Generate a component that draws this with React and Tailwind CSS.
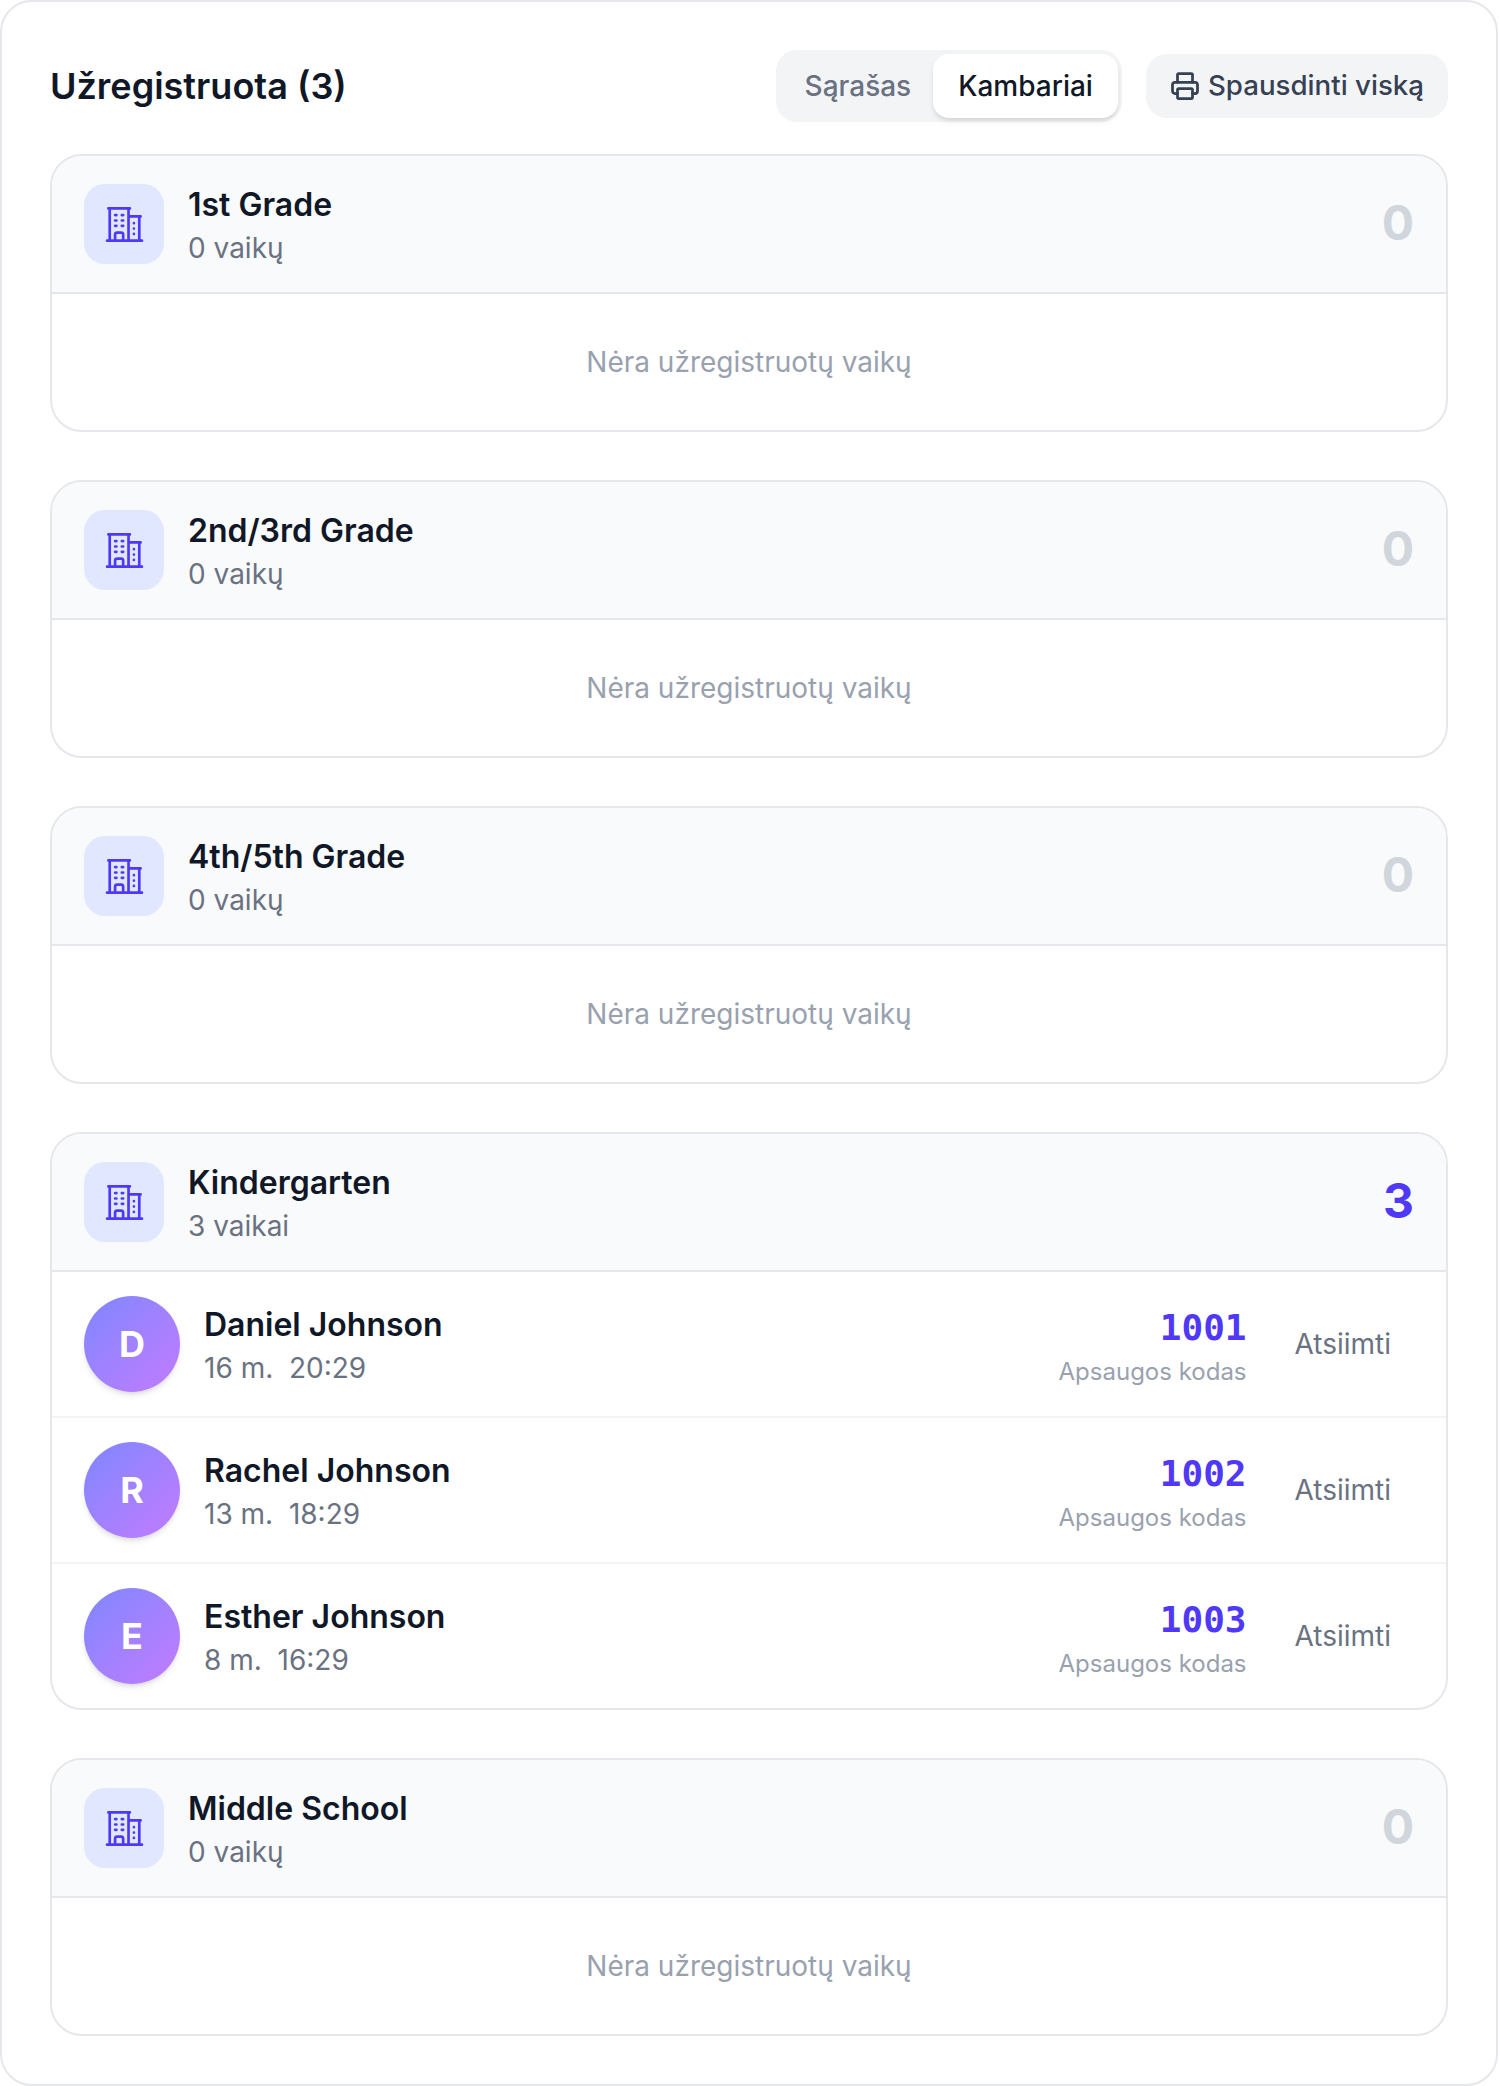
import React from 'react';
import { HiOutlineBuildingOffice2 } from 'react-icons/hi2';
import { Printer } from 'lucide-react';

const rooms = [
  { name: '1st Grade', count: 0, label: '0 vaikų', kids: [] },
  { name: '2nd/3rd Grade', count: 0, label: '0 vaikų', kids: [] },
  { name: '4th/5th Grade', count: 0, label: '0 vaikų', kids: [] },
  {
    name: 'Kindergarten',
    count: 3,
    label: '3 vaikai',
    kids: [
      { name: 'Daniel Johnson', initial: 'D', age: '16 m.', time: '20:29', code: '1001' },
      { name: 'Rachel Johnson', initial: 'R', age: '13 m.', time: '18:29', code: '1002' },
      { name: 'Esther Johnson', initial: 'E', age: '8 m.', time: '16:29', code: '1003' },
    ],
  },
  { name: 'Middle School', count: 0, label: '0 vaikų', kids: [] },
];

const KidRow = ({ kid }) => {
  return (
    <div className="flex items-center py-6 pl-8 pr-[55px] border-b-2 border-gray-100 last:border-b-0">
      <div className="w-24 h-24 rounded-full bg-gradient-to-br from-indigo-400 to-purple-400 flex items-center justify-center text-white text-[36px] font-bold shadow-md pb-[1px]">
        {kid.initial}
      </div>
      <div className="ml-6 flex-1 pt-[2px]">
        <div className="text-[32px] leading-[43px] font-semibold text-gray-900">{kid.name}</div>
        <div className="mt-[4px] text-[28px] leading-[37px] text-gray-500 whitespace-pre">{kid.age}  {kid.time}</div>
      </div>
      <div className="text-right mr-[48px] pt-[5px]">
        <div className="font-['DejaVu_Sans_Mono',monospace] text-[36px] leading-[43px] font-bold text-indigo-600">{kid.code}</div>
        <div className="mt-[7px] text-[24px] leading-[32px] text-gray-400">Apsaugos kodas</div>
      </div>
      <div className="text-[28px] text-gray-500">Atsiimti</div>
    </div>
  );
};

const Room = ({ room }) => {
  return (
    <div className="border-2 border-gray-200 rounded-[32px] overflow-hidden bg-white">
      <div className="flex items-center h-[138px] px-8 bg-gray-50 border-b-2 border-gray-200">
        <div className="w-20 h-20 rounded-[21px] bg-indigo-100 flex items-center justify-center text-indigo-600">
          <HiOutlineBuildingOffice2 className="w-[43px] h-[43px]" />
        </div>
        <div className="ml-6 flex-1 pt-[2px]">
          <div className="text-[32px] leading-[43px] font-semibold text-gray-900">{room.name}</div>
          <div className="mt-[4px] text-[28px] leading-[37px] text-gray-500">{room.label}</div>
        </div>
        <div className={room.count > 0 ? 'pb-[2px] text-[48px] font-bold text-indigo-600' : 'pb-[2px] text-[48px] font-bold text-gray-300'}>
          {room.count}
        </div>
      </div>
      {room.kids.length === 0 ? (
        <div className="h-[136px] flex items-center justify-center text-[28px] text-gray-400">Nėra užregistruotų vaikų</div>
      ) : (
        room.kids.map((kid) => <KidRow key={kid.code} kid={kid} />)
      )}
    </div>
  );
};

export default function App() {
  return (
    <div className="w-[1498px] bg-white border-2 border-gray-200 rounded-[32px] p-[48px] font-['Inter',sans-serif]">
      <div className="flex items-center justify-between mb-8 h-[72px]">
        <h2 className="text-[36px] font-semibold text-gray-900">Užregistruota (3)</h2>
        <div className="flex items-center gap-[24px]">
          <div className="flex items-center bg-gray-100 rounded-[21px] p-1 h-[72px]">
            <div className="pl-[25px] pr-[22px] text-[28px] font-medium text-gray-500">Sąrašas</div>
            <div className="px-[25px] h-[64px] flex items-center text-[28px] font-medium text-gray-900 bg-white rounded-[16px] shadow-md">Kambariai</div>
          </div>
          <div className="flex items-center gap-2 bg-gray-100 rounded-[21px] h-[64px] px-[24px] text-[27.7px] font-medium text-gray-700">
            <Printer className="w-[30px] h-[30px]" strokeWidth={2.2} />
            Spausdinti viską
          </div>
        </div>
      </div>
      <div className="flex flex-col gap-12">
        {rooms.map((room) => (
          <Room key={room.name} room={room} />
        ))}
      </div>
    </div>
  );
}
